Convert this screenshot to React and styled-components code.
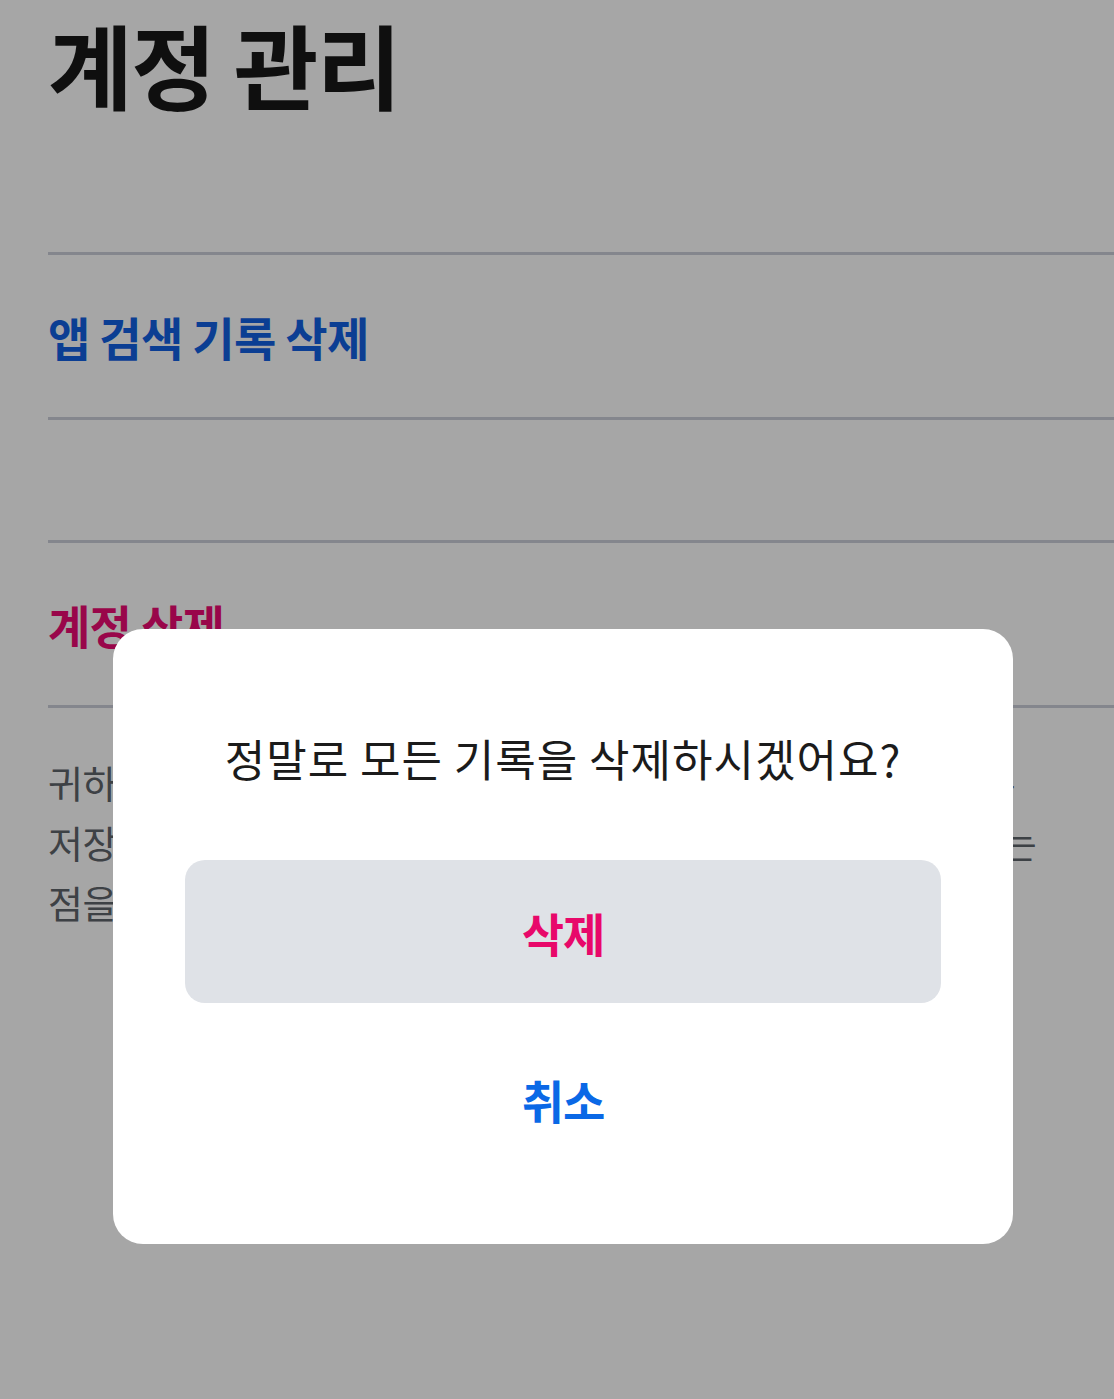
import React from "react";
import styled, { createGlobalStyle } from "styled-components";

const GlobalStyle = createGlobalStyle`
  html, body {
    margin: 0;
    padding: 0;
    background: #ffffff;
    font-family: "Noto Sans CJK KR", "Noto Sans", sans-serif;
  }
  * { box-sizing: border-box; }
`;

const Page = styled.main`
  padding-left: 48px;
  min-height: 1399px;
  overflow: hidden;
`;

const Title = styled.h1`
  margin: 0;
  height: 252px;
  padding-top: 3px;
  font-size: 92px;
  line-height: 120px;
  font-weight: 700;
  letter-spacing: -1.5px;
  color: #181818;
`;

const Divider = styled.hr`
  margin: 0;
  border: none;
  height: 3px;
  background: #cbced9;
`;

const Row = styled.div`
  height: ${(p) => p.$h}px;
  display: flex;
  align-items: center;
`;

const RowLabel = styled.span`
  font-size: 46px;
  font-weight: 700;
  letter-spacing: -0.7px;
  color: ${(p) => p.$color};
`;

const Paragraph = styled.p`
  margin: 44px 0 0;
  font-size: 38px;
  line-height: 60px;
  color: #5f646b;
  letter-spacing: -0.5px;
  white-space: nowrap;
`;

const Overlay = styled.div`
  position: fixed;
  inset: 0;
  background: rgba(0, 0, 0, 0.35);
  display: flex;
  align-items: flex-start;
  padding: 629px 0 0 113px;
`;

const Modal = styled.div`
  width: 900px;
  height: 615px;
  background: #ffffff;
  border-radius: 30px;
  padding: 72px 72px 0;
  display: flex;
  flex-direction: column;
`;

const Question = styled.div`
  height: 114px;
  display: flex;
  align-items: center;
  justify-content: center;
  font-size: 44px;
  font-weight: 400;
  color: #1b1b1b;
  letter-spacing: 1px;
  margin-bottom: 45px;
`;

const ActionButton = styled.button`
  height: 143px;
  border: none;
  border-radius: 20px;
  background: ${(p) => (p.$filled ? "#dfe2e7" : "transparent")};
  color: ${(p) => p.$color};
  font-family: inherit;
  font-size: 46px;
  font-weight: 700;
  letter-spacing: -1px;
  display: flex;
  align-items: center;
  justify-content: center;
  margin-bottom: ${(p) => p.$gap || 0}px;
  cursor: pointer;
`;

export default function App() {
  return (
    <>
      <GlobalStyle />
      <Page>
        <Title>계정 관리</Title>
        <Divider />
        <Row $h={162}>
          <RowLabel $color="#1160e2">앱 검색 기록 삭제</RowLabel>
        </Row>
        <Divider />
        <Row $h={120} />
        <Divider />
        <Row $h={162}>
          <RowLabel $color="#eb0a72">계정 삭제</RowLabel>
        </Row>
        <Divider />
        <Paragraph>
          귀하의 계정을 삭제하면 앱에 저장된 모든 검색 기록과 설정이 —
          <br />
          저장된 정보는, 삭제된 후에는, 다시 복구할 수 없게 되어 버린다는
          <br />
          점을 유의하시기 바랍니다.
        </Paragraph>
      </Page>
      <Overlay>
        <Modal role="dialog">
          <Question>정말로 모든 기록을 삭제하시겠어요?</Question>
          <ActionButton $filled $color="#e8086a" $gap={24}>
            삭제
          </ActionButton>
          <ActionButton $color="#0a68e6">취소</ActionButton>
        </Modal>
      </Overlay>
    </>
  );
}
